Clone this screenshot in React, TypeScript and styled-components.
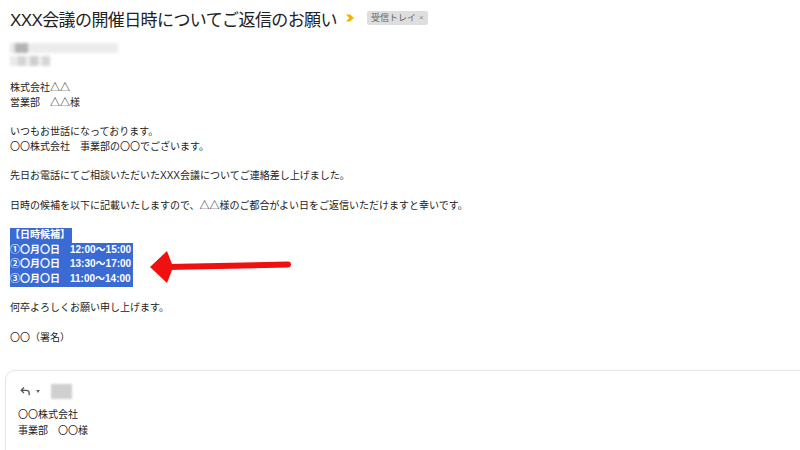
import styled, { createGlobalStyle } from "styled-components"

// Global page styles
const GlobalStyle = createGlobalStyle`
  html, body {
    margin: 0;
    padding: 0;
    background: #fff;
    overflow: hidden;
  }
  body {
    width: 800px;
    height: 450px;
    font-family: "Liberation Sans", "Noto Sans CJK JP", sans-serif;
    color: #222;
  }
`

const Page = styled.div`
  position: relative;
  width: 800px;
  height: 450px;
  padding: 0 10px;
  box-sizing: border-box;
  overflow: hidden;
`

const Header = styled.div`
  display: flex;
  align-items: center;
  height: 36px;
`

const Subject = styled.h1`
  margin: 0;
  font-size: 17px;
  font-weight: 400;
  letter-spacing: -0.6px;
  color: #222;
  white-space: nowrap;
`

const Marker = styled.svg`
  margin-left: 8px;
  width: 10px;
  height: 10px;
`

const Chip = styled.span`
  display: inline-flex;
  align-items: center;
  gap: 3px;
  margin-left: 12px;
  height: 14px;
  padding: 0 4px;
  border-radius: 2px;
  background: #dedede;
  color: #666;
  font-size: 9px;
  line-height: 14px;
`

const ChipClose = styled.span`
  font-size: 8px;
  color: #888;
`

// Redacted sender area
const Sender = styled.div`
  display: flex;
  flex-direction: column;
  gap: 3px;
  margin-top: 7px;
  filter: blur(1.8px);
`

const BlurRow = styled.div`
  display: flex;
  height: 10px;
`

const BlurBit = styled.span<{ $w: number; $shade: string }>`
  width: ${(p) => p.$w}px;
  height: 100%;
  background: ${(p) => p.$shade};
`

const Body = styled.div`
  margin-top: 15px;
  font-size: 10px;
  line-height: 14.7px;
  color: #222;
`

const Line = styled.div`
  height: 14.7px;
  white-space: pre;
`

const Selected = styled.div`
  display: flex;
  flex-direction: column;
  align-items: flex-start;
`

const SelLine = styled.span`
  display: inline-block;
  height: 14.7px;
  padding-right: 2px;
  background: #3a6bd4;
  color: #fff;
  font-weight: 700;
  white-space: pre;
`

const Arrow = styled.svg`
  position: absolute;
  left: 145px;
  top: 246px;
  width: 150px;
  height: 40px;
`

const ReplyBox = styled.div`
  margin: 25px -30px 0 -5px;
  padding: 12px 12px 20px;
  border: 1px solid #e6e6e6;
  border-radius: 10px;
  box-shadow: 0 0 2px rgba(0, 0, 0, 0.06);
  height: 120px;
`

const ReplyBar = styled.div`
  display: flex;
  align-items: center;
  gap: 5px;
  height: 16px;
  padding-left: 2px;
`

const Caret = styled.span`
  width: 0;
  height: 0;
  border-left: 2.5px solid transparent;
  border-right: 2.5px solid transparent;
  border-top: 3px solid #666;
`

const Recipient = styled.span`
  margin-left: 6px;
  width: 21px;
  height: 15px;
  background: #cfcfcf;
  filter: blur(1px);
`

const ReplyText = styled.div`
  margin-top: 8px;
  font-size: 10px;
  line-height: 15.5px;
  color: #222;
`

export default function App() {
  return (
    <>
      <GlobalStyle />
      <Page>
        <Header>
          <Subject>XXX会議の開催日時についてご返信のお願い</Subject>
          <Marker viewBox="0 0 10 10">
            <path d="M1 1.5h4.2L9 5 5.2 8.5H1L4.2 5z" fill="#f4b400" />
          </Marker>
          <Chip>
            受信トレイ<ChipClose>×</ChipClose>
          </Chip>
        </Header>

        <Sender>
          <BlurRow>
            <BlurBit $w={5} $shade="#e8e8e8" />
            <BlurBit $w={13} $shade="#b4b4b4" />
            <BlurBit $w={90} $shade="#ececec" />
          </BlurRow>
          <BlurRow>
            <BlurBit $w={8} $shade="#eaeaea" />
            <BlurBit $w={8} $shade="#d4d4d4" />
            <BlurBit $w={4} $shade="#efefef" />
            <BlurBit $w={8} $shade="#cecece" />
            <BlurBit $w={4} $shade="#efefef" />
            <BlurBit $w={8} $shade="#d6d6d6" />
          </BlurRow>
        </Sender>

        <Body>
          <Line>株式会社△△</Line>
          <Line>営業部　△△様</Line>
          <Line />
          <Line>いつもお世話になっております。</Line>
          <Line>〇〇株式会社　事業部の〇〇でございます。</Line>
          <Line />
          <Line>先日お電話にてご相談いただいたXXX会議についてご連絡差し上げました。</Line>
          <Line />
          <Line>日時の候補を以下に記載いたしますので、△△様のご都合がよい日をご返信いただけますと幸いです。</Line>
          <Line />
          <Selected>
            <SelLine>【日時候補】</SelLine>
            <SelLine>①〇月〇日　12:00～15:00</SelLine>
            <SelLine>②〇月〇日　13:30～17:00</SelLine>
            <SelLine>③〇月〇日　11:00～14:00</SelLine>
          </Selected>
          <Line />
          <Line>何卒よろしくお願い申し上げます。</Line>
          <Line />
          <Line>〇〇（署名）</Line>
        </Body>

        <Arrow viewBox="145 246 150 40">
          <line x1="168" y1="267" x2="288" y2="264.5" stroke="#f01010" strokeWidth="6" strokeLinecap="round" />
          <polygon points="150,267 167,251 172,264 172,270 167,283" fill="#f01010" />
        </Arrow>

        <ReplyBox>
          <ReplyBar>
            <svg width="11" height="10" viewBox="0 0 11 10">
              <path d="M4 1.5 1.2 4.3 4 7.1M1.2 4.3h5a3 3 0 0 1 3 3v2" fill="none" stroke="#555" strokeWidth="1.3" />
            </svg>
            <Caret />
            <Recipient />
          </ReplyBar>
          <ReplyText>
            〇〇株式会社
            <br />
            事業部　〇〇様
          </ReplyText>
        </ReplyBox>
      </Page>
    </>
  )
}
